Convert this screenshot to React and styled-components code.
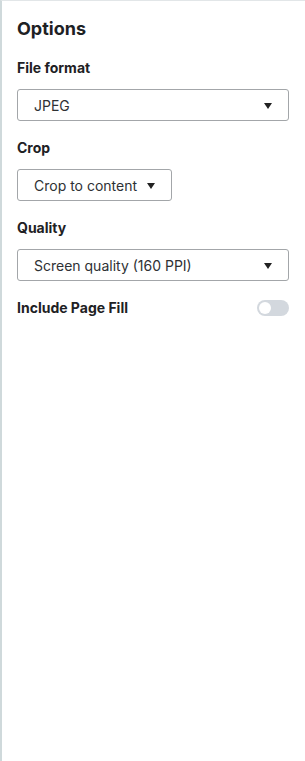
import React from 'react';
import styled, { createGlobalStyle } from 'styled-components';

const Global = createGlobalStyle`
  html, body { margin: 0; padding: 0; background: #fff; }
  body { font-family: Inter, "Noto Sans", "Liberation Sans", sans-serif; color: #1e2022; }
`;

const Panel = styled.aside`
  box-sizing: border-box;
  width: 305px;
  height: 761px;
  border-top: 1px solid #e2e6e8;
  border-left: 2px solid #cfd9db;
  padding: 16px 16px 0 15px;
  display: flex;
  flex-direction: column;
`;

const Title = styled.h2`
  margin: 0 0 17px;
  font-size: 18px;
  line-height: 24px;
  font-weight: 700;
  color: #1e2124;
`;

const Field = styled.div`
  display: flex;
  flex-direction: column;
  gap: 11px;
  margin-bottom: 17px;
`;

const Label = styled.label`
  font-size: 14px;
  line-height: 20px;
  font-weight: 700;
  color: #1e2124;
`;

const Select = styled.button`
  box-sizing: border-box;
  align-self: ${p => (p.$auto ? 'flex-start' : 'stretch')};
  height: 32px;
  display: flex;
  align-items: center;
  justify-content: space-between;
  gap: 10px;
  padding: 0 16px;
  background: #fff;
  border: 1px solid #a3a6a9;
  border-radius: 3px;
  font-family: inherit;
  font-size: 14px;
  color: #2e3134;
  cursor: pointer;
`;

const Arrow = styled.span`
  width: 0;
  height: 0;
  border-left: 4px solid transparent;
  border-right: 4px solid transparent;
  border-top: 6px solid #222;
  margin-top: 1px;
`;

const Row = styled.div`
  display: flex;
  align-items: center;
  justify-content: space-between;
`;

const Toggle = styled.span`
  position: relative;
  width: 32px;
  height: 16px;
  border-radius: 8px;
  background: #d3d8de;
  &::after {
    content: '';
    position: absolute;
    left: 2px;
    top: 2px;
    width: 12px;
    height: 12px;
    border-radius: 50%;
    background: #fff;
  }
`;

const Dropdown = ({ value, auto }) => (
  <Select $auto={auto}>
    <span>{value}</span>
    <Arrow />
  </Select>
);

export default function App() {
  return (
    <>
      <Global />
      <Panel>
        <Title>Options</Title>
        <Field>
          <Label>File format</Label>
          <Dropdown value="JPEG" />
        </Field>
        <Field>
          <Label>Crop</Label>
          <Dropdown value="Crop to content" auto />
        </Field>
        <Field>
          <Label>Quality</Label>
          <Dropdown value="Screen quality (160 PPI)" />
        </Field>
        <Row>
          <Label>Include Page Fill</Label>
          <Toggle />
        </Row>
      </Panel>
    </>
  );
}
